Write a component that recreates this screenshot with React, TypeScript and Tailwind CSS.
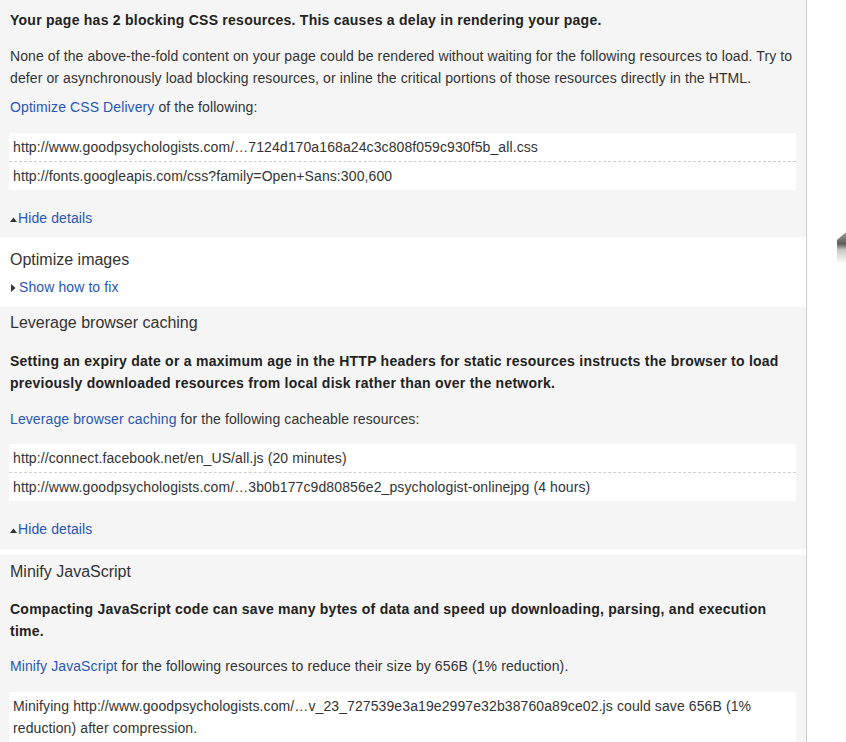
import type { ReactNode } from "react";

const LINK = "text-[#2856b6]";
const BOLD = "font-bold leading-[22px] tracking-[0.25px] text-[#222]";

function UpArrow() {
  return (
    <svg width="7" height="5" viewBox="0 0 7 5" className="mr-[1px] inline-block align-middle" aria-hidden>
      <path d="M0 5 L3.5 0.5 L7 5 Z" fill="#333" />
    </svg>
  );
}

function RightArrow() {
  return (
    <svg width="5" height="8" viewBox="0 0 5 8" className="mr-[3px] ml-px inline-block align-middle" aria-hidden>
      <path d="M0 0 L4.5 4 L0 8 Z" fill="#333" />
    </svg>
  );
}

function UrlBox({ rows, className = "" }: { rows: ReactNode[]; className?: string }) {
  return (
    <div className={`-ml-px bg-white ${className}`}>
      {rows.map((r, i) => (
        <div
          key={i}
          className={`px-1 py-[3px] leading-[22px] ${i > 0 ? "border-t border-dashed border-[#cfcfcf]" : ""}`}
        >
          {r}
        </div>
      ))}
    </div>
  );
}

function HideDetails() {
  return (
    <div className="mt-[17px] leading-[22px]">
      <UpArrow />
      <span className={LINK}>Hide details</span>
    </div>
  );
}

export default function App() {
  return (
    <div
      className="flex min-h-screen bg-white text-[14px] tracking-[0.1px] text-[#333]"
      style={{ fontFamily: '"Liberation Sans", Arial, sans-serif' }}
    >
      <div className="w-[807px] shrink-0 border-r border-[#cccccc]">
        {/* Blocking CSS */}
        <section className="bg-[#f5f5f5] px-[10px] pt-[9px] pb-[8px]">
          <p className={BOLD}>
            Your page has 2 blocking CSS resources. This causes a delay in rendering your page.
          </p>
          <p className="mt-[14px] leading-[22px]">
            None of the above-the-fold content on your page could be rendered without waiting for the following
            resources to load. Try to defer or asynchronously load blocking resources, or inline the critical portions
            of those resources directly in the HTML.
          </p>
          <p className="mt-[7px] leading-[22px]">
            <span className={LINK}>Optimize CSS Delivery</span> of the following:
          </p>
          <UrlBox
            className="mt-[15px]"
            rows={[
              "http://www.goodpsychologists.com/…7124d170a168a24c3c808f059c930f5b_all.css",
              "http://fonts.googleapis.com/css?family=Open+Sans:300,600",
            ]}
          />
          <HideDetails />
        </section>

        {/* Optimize images */}
        <section className="bg-white px-[10px] pt-[12px] pb-[8px]">
          <h3 className="text-[16px] leading-[22px] tracking-normal">Optimize images</h3>
          <div className="mt-[5px] leading-[22px]">
            <RightArrow />
            <span className={LINK}>Show how to fix</span>
          </div>
        </section>

        {/* Browser caching */}
        <section className="mt-px bg-[#f5f5f5] px-[10px] pt-[5px] pb-[9px]">
          <h3 className="text-[16px] leading-[22px] tracking-normal">Leverage browser caching</h3>
          <p className={`mt-[16px] ${BOLD}`}>
            Setting an expiry date or a maximum age in the HTTP headers for static resources instructs the browser to
            load previously downloaded resources from local disk rather than over the network.
          </p>
          <p className="mt-[14px] leading-[22px]">
            <span className={LINK}>Leverage browser caching</span> for the following cacheable resources:
          </p>
          <UrlBox
            className="mt-[14px]"
            rows={[
              "http://connect.facebook.net/en_US/all.js (20 minutes)",
              "http://www.goodpsychologists.com/…3b0b177c9d80856e2_psychologist-onlinejpg (4 hours)",
            ]}
          />
          <HideDetails />
        </section>

        <div className="h-[6px] bg-white" />

        {/* Minify JS */}
        <section className="bg-[#f5f5f5] px-[10px] pt-[6px] pb-[8px]">
          <h3 className="text-[16px] leading-[22px] tracking-normal">Minify JavaScript</h3>
          <p className={`mt-[15px] ${BOLD}`}>
            Compacting JavaScript code can save many bytes of data and speed up downloading, parsing, and execution
            time.
          </p>
          <p className="mt-[13px] leading-[22px]">
            <span className={LINK}>Minify JavaScript</span> for the following resources to reduce their size by 656B
            (1% reduction).
          </p>
          <UrlBox
            className="mt-[15px]"
            rows={[
              <span key="m">
                Minifying http://www.goodpsychologists.com/…v_23_727539e3a19e2997e32b38760a89ce02.js could save 656B
                (1% reduction) after compression.
              </span>,
            ]}
          />
        </section>
      </div>

      <div className="flex-1 pt-[232px] pl-[29px]">
        <svg width="12" height="32" viewBox="0 0 12 32" aria-hidden>
          <defs>
            <linearGradient id="lap" x1="0" y1="0" x2="0" y2="1">
              <stop offset="0" stopColor="#9a9a9a" />
              <stop offset="0.35" stopColor="#5c5c5c" />
              <stop offset="0.55" stopColor="#c8c8c8" />
              <stop offset="1" stopColor="#ffffff" />
            </linearGradient>
          </defs>
          <path d="M1 8 L9 1 L12 1 L12 32 L1 32 Z" fill="url(#lap)" />
        </svg>
      </div>
    </div>
  );
}
